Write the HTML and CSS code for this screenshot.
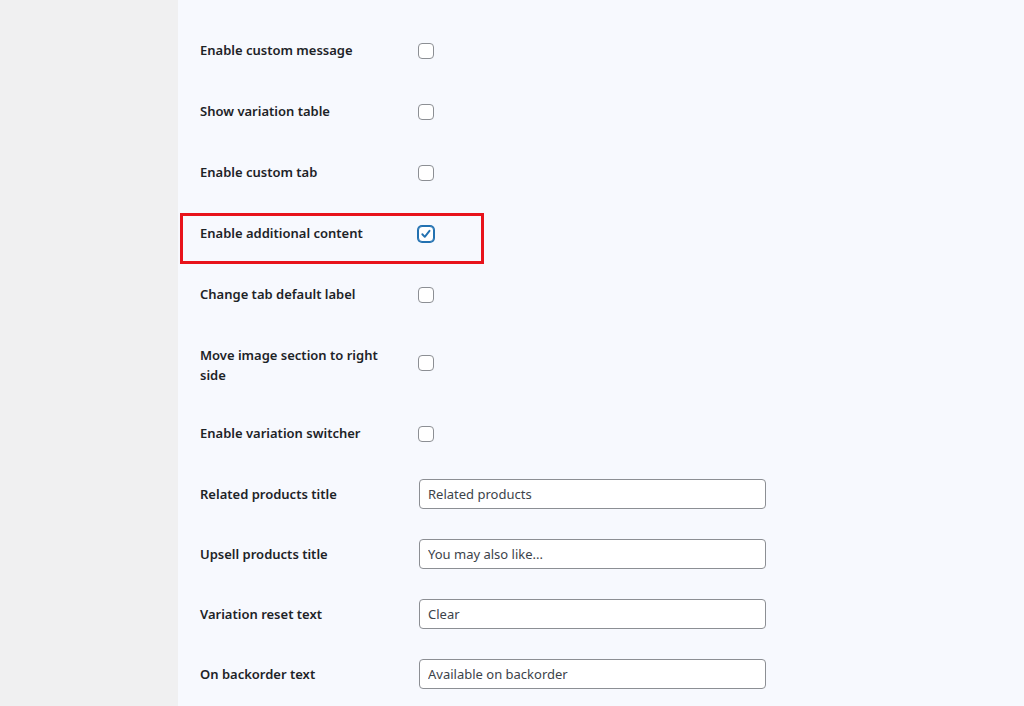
FILE: index.html
```html
<!DOCTYPE html>
<html>
<head>
  <title>Product Settings</title>
  <link rel="stylesheet" href="styles.css">
</head>
<body>
  <div class="layout">
    <div class="sidebar"></div>
    <div class="content">
      <table class="form-table">
        <tr class="row-check">
          <th>Enable custom message</th>
          <td><input type="checkbox" class="check"></td>
        </tr>
        <tr class="row-check">
          <th>Show variation table</th>
          <td><input type="checkbox" class="check"></td>
        </tr>
        <tr class="row-check">
          <th>Enable custom tab</th>
          <td><input type="checkbox" class="check"></td>
        </tr>
        <tr class="row-check highlight">
          <th>Enable additional content<span class="marker"></span></th>
          <td><input type="checkbox" class="check" checked></td>
        </tr>
        <tr class="row-check">
          <th>Change tab default label</th>
          <td><input type="checkbox" class="check"></td>
        </tr>
        <tr class="row-check row-wrap">
          <th>Move image section to right side</th>
          <td><input type="checkbox" class="check"></td>
        </tr>
        <tr class="row-check">
          <th>Enable variation switcher</th>
          <td><input type="checkbox" class="check"></td>
        </tr>
        <tr class="row-text">
          <th>Related products title</th>
          <td><input type="text" class="text" value="Related products"></td>
        </tr>
        <tr class="row-text">
          <th>Upsell products title</th>
          <td><input type="text" class="text" value="You may also like..."></td>
        </tr>
        <tr class="row-text">
          <th>Variation reset text</th>
          <td><input type="text" class="text" value="Clear"></td>
        </tr>
        <tr class="row-text">
          <th>On backorder text</th>
          <td><input type="text" class="text" value="Available on backorder"></td>
        </tr>
      </table>
    </div>
  </div>
</body>
</html>
```

FILE: styles.css
```css
body {
  margin: 0;
  font-family: "Noto Sans", "Open Sans", sans-serif;
  color: #1d2327;
  background-color: #f0f0f1;
  overflow: hidden;
}

.layout {
  display: flex;
  min-height: 706px;
}

.sidebar {
  width: 178px;
  flex-shrink: 0;
  background-color: #f0f0f1;
}

.content {
  flex: 1;
  background-color: #f7f9fe;
  padding: 20px 0 0 22px;
}

.form-table {
  border-collapse: collapse;
}

.form-table th {
  width: 196px;
  padding: 20px 22px 21px 0;
  text-align: left;
  vertical-align: top;
  font-size: 13px;
  font-weight: 600;
  line-height: 20px;
  position: relative;
}

.form-table td {
  padding: 0;
  vertical-align: middle;
}

.row-wrap th {
  padding-bottom: 18px;
}

.row-wrap td {
  padding-bottom: 2px;
}

.row-text th {
  padding: 20px 22px 20px 0;
}

.row-text td {
  padding: 15px 0 15px 0;
}

.check {
  appearance: none;
  -webkit-appearance: none;
  display: block;
  width: 16px;
  height: 16px;
  margin: 0;
  border: 1px solid #8c8f94;
  border-radius: 4px;
  background-color: #fff;
  box-sizing: border-box;
}

.check:checked {
  border-color: #2271b1;
  box-shadow: 0 0 0 1px #2271b1;
  background-image: url("data:image/svg+xml,%3Csvg xmlns='http://www.w3.org/2000/svg' viewBox='0 0 16 16'%3E%3Cpath d='M3.8 8.3l2.8 2.9L12 4.4' fill='none' stroke='%232271b1' stroke-width='2.2' stroke-linecap='round' stroke-linejoin='round'/%3E%3C/svg%3E");
  background-size: 14px 14px;
  background-position: center;
  background-repeat: no-repeat;
}

.text {
  display: block;
  width: 347px;
  height: 30px;
  margin-left: 1px;
  padding: 0 8px;
  box-sizing: border-box;
  border: 1px solid #8c8f94;
  border-radius: 4px;
  background-color: #fff;
  font-family: "Noto Sans", "Open Sans", sans-serif;
  font-size: 13px;
  color: #3c434a;
}

.marker {
  position: absolute;
  left: -20px;
  top: 10px;
  width: 304px;
  height: 51px;
  border: 3px solid #e8131b;
  box-sizing: border-box;
}
```
